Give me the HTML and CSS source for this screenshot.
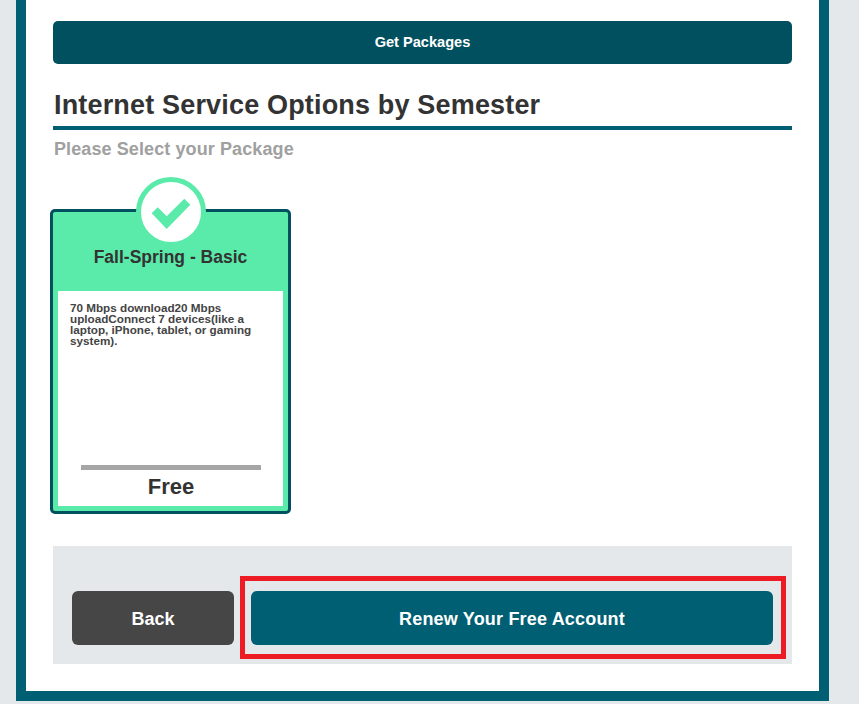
FILE: index.html
```html
<!DOCTYPE html>
<html lang="en">
<head>
<meta charset="utf-8">
<title>Internet Service Options</title>
<link rel="stylesheet" href="styles.css">
</head>
<body>
<main class="frame">
  <button class="get-packages" type="button">Get Packages</button>
  <h1 class="title">Internet Service Options by Semester</h1>
  <p class="subtitle">Please Select your Package</p>
  <section class="card">
    <div class="badge">
      <svg class="check" viewBox="0 0 40 32" width="40" height="32" aria-hidden="true"><path d="M0.7 16.3 6.7 10.3 15.7 19.3 33.3 1.7 39.3 7.7 15.7 32z" fill="#5aeaa9"/></svg>
    </div>
    <h2 class="card-name">Fall-Spring - Basic</h2>
    <div class="card-body">
      <p class="card-text">70 Mbps download20 Mbps uploadConnect 7 devices(like a laptop, iPhone, tablet, or gaming system).</p>
      <div class="price">Free</div>
    </div>
  </section>
  <footer class="actions">
    <button class="btn btn-back" type="button">Back</button>
    <button class="btn btn-renew" type="button">Renew Your Free Account</button>
    <div class="highlight"></div>
  </footer>
</main>
</body>
</html>
```
FILE: styles.css
```css
html, body {
  margin: 0;
  padding: 0;
  height: 704px;
  overflow: hidden;
  background: #e4e8eb;
  font-family: "Liberation Sans", Arial, sans-serif;
}
.frame {
  box-sizing: border-box;
  width: 813px;
  height: 701px;
  margin-left: 16px;
  padding: 21px 27px 0;
  background: #fff;
  border: 10px solid #005f73;
  border-top: 0;
}
.get-packages {
  display: block;
  width: 100%;
  height: 43px;
  padding: 0 0 2px;
  border: 0;
  border-radius: 5px;
  background: #00505f;
  color: #fff;
  font: bold 14.6px "Liberation Sans", Arial, sans-serif;
}
.title {
  margin: 23px 0 0;
  padding: 0 0 5px 1px;
  height: 34px;
  line-height: 36px;
  border-bottom: 4px solid #005f73;
  color: #333;
  font-size: 27px;
  font-weight: bold;
  letter-spacing: 0.17px;
}
.subtitle {
  margin: 9px 0 0 1px;
  height: 21px;
  line-height: 21px;
  color: #a0a0a0;
  font-size: 18px;
  font-weight: bold;
  letter-spacing: 0.1px;
}
.card {
  position: relative;
  box-sizing: border-box;
  width: 241px;
  height: 305px;
  margin: 49px 0 0 -3px;
  border: 3px solid #00505f;
  border-radius: 5px;
  background: #5aeaa9;
  display: flex;
  flex-direction: column;
}
.badge {
  position: absolute;
  top: -35px;
  left: 83px;
  box-sizing: border-box;
  width: 70px;
  height: 70px;
  border: 5px solid #5aeaa9;
  border-radius: 50%;
  background: #fff;
  display: flex;
  align-items: center;
  justify-content: center;
}
.check {
  display: block;
  margin-top: 2px;
}
.card-name {
  margin: 33px 0 0;
  height: 46px;
  line-height: 24px;
  text-align: center;
  color: #333;
  font-size: 17.5px;
  font-weight: bold;
}
.card-body {
  flex: 1;
  margin: 0 5px 5px;
  padding: 11px 12px 0;
  background: #fff;
  display: flex;
  flex-direction: column;
}
.card-text {
  flex: 1;
  margin: 0;
  color: #444;
  font-size: 11.7px;
  font-weight: bold;
  line-height: 11px;
}
.price {
  margin: 0 10px 7px 11px;
  padding-top: 5px;
  height: 24px;
  line-height: 24px;
  border-top: 5px solid #a6a6a6;
  text-align: center;
  color: #333;
  font-size: 22px;
  font-weight: bold;
}
.actions {
  position: relative;
  box-sizing: border-box;
  height: 118px;
  margin-top: 32px;
  padding: 45px 19px 19px;
  background: #e4e8eb;
  display: flex;
  gap: 17px;
}
.btn {
  height: 54px;
  padding: 2px 0 0;
  border: 0;
  border-radius: 6px;
  color: #fff;
  font: bold 18px "Liberation Sans", Arial, sans-serif;
}
.btn-back {
  width: 162px;
  background: #464646;
}
.btn-renew {
  width: 522px;
  background: #005f73;
  letter-spacing: 0.18px;
}
.highlight {
  position: absolute;
  left: 187px;
  top: 30px;
  width: 546px;
  height: 83px;
  box-sizing: border-box;
  border: 5px solid #ed1c24;
}
```
